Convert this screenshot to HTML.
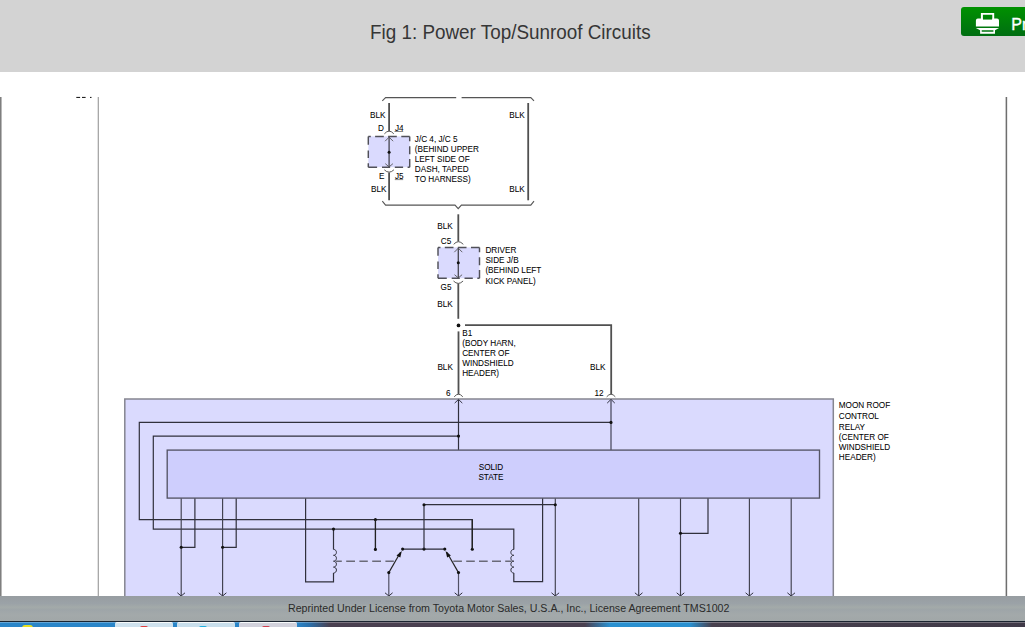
<!DOCTYPE html>
<html><head><meta charset="utf-8"><style>
html,body{margin:0;padding:0;}
body{width:1025px;height:627px;overflow:hidden;position:relative;background:#fff;font-family:"Liberation Sans",sans-serif;}
#hdr{position:absolute;left:0;top:0;width:1025px;height:72px;background:#d3d3d3;}
#title{position:absolute;left:369.5px;top:20px;font-size:20px;color:#363636;transform:scaleX(0.943);transform-origin:0 0;white-space:nowrap;line-height:24px;}
#btn{position:absolute;left:961px;top:7px;width:80px;height:29px;border-radius:3px;background:linear-gradient(#009100,#006e12);}
#btn span{position:absolute;left:50.3px;top:8px;font-size:16px;color:#fff;-webkit-text-stroke:0.35px #fff;line-height:20px;}
svg{position:absolute;left:0;top:0;}
#foot{position:absolute;left:0;top:596px;width:1025px;height:25px;background:linear-gradient(#979da1 0,#9ba2a7 30%,#a3aaa9 45%,#9ea5a8 55%,#a3a9aa 75%,#a1a7a8 100%);}
#foot span{position:absolute;left:288px;top:5px;font-size:10.65px;color:#2a2a2a;white-space:nowrap;line-height:14px;}
#task{position:absolute;left:0;top:621px;width:1025px;height:6px;background:linear-gradient(90deg,#2a85c8 0,#2a85c8 297px,#2c6ea8 310px,#4a4050 330px,#4a4050 585px,#2a90d0 610px,#2a90d0 690px,#48404e 712px,#403a48 1025px);border-top:1px solid #1a2430;box-sizing:border-box;}
#task:after{content:"";position:absolute;left:0;top:0;width:1025px;height:1px;background:rgba(255,255,255,0.28);}
#task i{position:absolute;top:0;height:5px;border-top:1px solid #f4f8fa;box-sizing:border-box;border-radius:2px 2px 0 0;}
</style></head><body>
<div id="hdr"><div id="title">Fig 1: Power Top/Sunroof Circuits</div>
<div id="btn"><svg width="30" height="26" style="position:absolute;left:11px;top:3px" viewBox="0 0 30 26">
<path d="M8.9,2.9H22.2V10.2H8.9Z M10.9,4.8H20.3V9.75H10.9Z" fill="#fff" fill-rule="evenodd"/>
<path d="M5.9,8.5H10.9V9.75H20.3V8.5H25Q27,8.5 27,10.5V16.6H3.9V10.5Q3.9,8.5 5.9,8.5Z" fill="#fff"/>
<path d="M3.9,18H27L23,20.3H8.1Z" fill="#fff"/>
<path d="M8.1,18H23V23.7H8.1Z M9.7,19.3H21.4V21.8H9.7Z" fill="#fff" fill-rule="evenodd"/>
</svg><span>Print</span></div></div>
<svg width="1025" height="627" viewBox="0 0 1025 627" style="font-family:'Liberation Sans',sans-serif">
<rect x="0" y="97" width="1" height="503" fill="#7f7f7f"/><rect x="1" y="97" width="1" height="503" fill="#b8b8b8"/>
<rect x="97" y="97" width="1" height="503" fill="#e2e2e2"/><rect x="98" y="97" width="1" height="503" fill="#a8a8a8"/>
<rect x="1005" y="97" width="1" height="503" fill="#c8c8c8"/><rect x="1006" y="97" width="1" height="503" fill="#6e6e6e"/><rect x="1007" y="97" width="1" height="503" fill="#e8e8e8"/>
<rect x="76.3" y="96.9" width="3.8" height="1.1" fill="#222"/>
<rect x="82" y="96.9" width="3.6" height="1.1" fill="#222"/>
<rect x="90" y="96.9" width="1.5" height="1.1" fill="#222"/>
<polyline points="382.3,100.8 385.6,97.6 456.2,97.6" fill="none" stroke="#555" stroke-width="1.1" />
<polyline points="461.6,97.6 530.8,97.6 534,100.8" fill="none" stroke="#555" stroke-width="1.1" />
<polyline points="382.3,201.2 385.6,205.1 455,205.1 458.2,208.6 461.4,205.1 530.8,205.1 534,201.2" fill="none" stroke="#555" stroke-width="1.1" />
<line x1="389.1" y1="103" x2="389.1" y2="131.2" stroke="#505050" stroke-width="1.8" />
<path d="M384.4,133.8 Q389.1,128.4 393.8,133.8" fill="none" stroke="#505050" stroke-width="0.95"/>
<rect x="368.3" y="136.4" width="41.39999999999998" height="30.799999999999983" fill="#dadafe"/>
<path d="M368.3,136.4H370.8M375.1,136.4H383.8M388.1,136.4H396.8M401.3,136.4H409.7M368.3,167.2H377.1M382.0,167.2H390.1M394.8,167.2H403.1M407.6,167.2H409.7M409.7,136.4V141.20000000000002M409.7,146.3V154.3M409.7,159.1V167.2M368.3,136.4V144.70000000000002M368.3,150.5V158.1M368.3,163.20000000000002V167.2" fill="none" stroke="#505058" stroke-width="1.45" stroke-linecap="butt"/>
<line x1="389.1" y1="137" x2="389.1" y2="167" stroke="#4a4a55" stroke-width="1.35" />
<polyline points="385.1,141.2 389.1,137.2 393.1,141.2" fill="none" stroke="#555" stroke-width="0.9" />
<polyline points="385.3,163.70000000000002 389.1,166.9 392.90000000000003,163.70000000000002" fill="none" stroke="#555" stroke-width="0.9" />
<circle cx="389.1" cy="152.2" r="1.5" fill="#111"/>
<path d="M384.3,169.8 Q389.1,174.5 393.9,169.8" fill="none" stroke="#505050" stroke-width="0.95"/>
<line x1="389.1" y1="172.5" x2="389.1" y2="200.3" stroke="#505050" stroke-width="1.8" />
<line x1="528.2" y1="103" x2="528.2" y2="200.3" stroke="#505050" stroke-width="1.8" />
<text x="370" y="118.2" font-size="8.2" text-anchor="start" fill="#000" stroke="#000" stroke-width="0.05" >BLK</text>
<text x="509.3" y="118.2" font-size="8.2" text-anchor="start" fill="#000" stroke="#000" stroke-width="0.05" >BLK</text>
<text x="378" y="131" font-size="8.2" text-anchor="start" fill="#000" stroke="#000" stroke-width="0.05" >D</text>
<text x="395" y="131" font-size="8.2" text-anchor="start" fill="#000" stroke="#000" stroke-width="0.05" >J4</text>
<line x1="394.5" y1="131.5" x2="403.2" y2="131.5" stroke="#555" stroke-width="0.7" />
<text x="379" y="178.7" font-size="8.2" text-anchor="start" fill="#000" stroke="#000" stroke-width="0.05" >E</text>
<text x="395" y="178.7" font-size="8.2" text-anchor="start" fill="#000" stroke="#000" stroke-width="0.05" >J5</text>
<line x1="394.8" y1="179.6" x2="403.2" y2="179.6" stroke="#555" stroke-width="0.7" />
<text x="371" y="192.2" font-size="8.2" text-anchor="start" fill="#000" stroke="#000" stroke-width="0.05" >BLK</text>
<text x="509.3" y="192.2" font-size="8.2" text-anchor="start" fill="#000" stroke="#000" stroke-width="0.05" >BLK</text>
<text x="414.8" y="142.2" font-size="8.2" text-anchor="start" fill="#000" stroke="#000" stroke-width="0.05" >J/C 4, J/C 5</text>
<text x="414.8" y="152.04999999999998" font-size="8.2" text-anchor="start" fill="#000" stroke="#000" stroke-width="0.05" >(BEHIND UPPER</text>
<text x="414.8" y="161.89999999999998" font-size="8.2" text-anchor="start" fill="#000" stroke="#000" stroke-width="0.05" >LEFT SIDE OF</text>
<text x="414.8" y="171.75" font-size="8.2" text-anchor="start" fill="#000" stroke="#000" stroke-width="0.05" >DASH, TAPED</text>
<text x="414.8" y="181.6" font-size="8.2" text-anchor="start" fill="#000" stroke="#000" stroke-width="0.05" >TO HARNESS)</text>
<line x1="458.3" y1="214.3" x2="458.3" y2="241.5" stroke="#505050" stroke-width="1.8" />
<path d="M453.7,244.3 Q458.3,239.1 463.3,244.3" fill="none" stroke="#505050" stroke-width="0.95"/>
<rect x="438" y="247.4" width="41.5" height="30.799999999999983" fill="#dadafe"/>
<path d="M438,247.4H440.5M444.8,247.4H453.5M457.8,247.4H466.5M471,247.4H479.5M438,278.2H446.8M451.7,278.2H459.8M464.5,278.2H472.8M477.3,278.2H479.5M479.5,247.4V252.20000000000002M479.5,257.3V265.3M479.5,270.1V278.2M438,247.4V255.70000000000002M438,261.5V269.1M438,274.2V278.2" fill="none" stroke="#505058" stroke-width="1.45" stroke-linecap="butt"/>
<line x1="458.3" y1="248" x2="458.3" y2="278" stroke="#4a4a55" stroke-width="1.35" />
<polyline points="454.3,252.2 458.3,248.2 462.3,252.2" fill="none" stroke="#555" stroke-width="0.9" />
<polyline points="454.5,274.7 458.3,277.9 462.1,274.7" fill="none" stroke="#555" stroke-width="0.9" />
<circle cx="458.3" cy="262.8" r="1.5" fill="#111"/>
<path d="M453.5,281 Q458.3,285.8 463.1,281" fill="none" stroke="#505050" stroke-width="0.95"/>
<line x1="458.3" y1="283.5" x2="458.3" y2="318.8" stroke="#505050" stroke-width="1.8" />
<text x="437.2" y="228.8" font-size="8.2" text-anchor="start" fill="#000" stroke="#000" stroke-width="0.05" >BLK</text>
<text x="440.8" y="244.2" font-size="8.2" text-anchor="start" fill="#000" stroke="#000" stroke-width="0.05" >C5</text>
<text x="440.6" y="289.8" font-size="8.2" text-anchor="start" fill="#000" stroke="#000" stroke-width="0.05" >G5</text>
<text x="437.2" y="306.8" font-size="8.2" text-anchor="start" fill="#000" stroke="#000" stroke-width="0.05" >BLK</text>
<text x="485.4" y="253.2" font-size="8.2" text-anchor="start" fill="#000" stroke="#000" stroke-width="0.05" >DRIVER</text>
<text x="485.4" y="263.3" font-size="8.2" text-anchor="start" fill="#000" stroke="#000" stroke-width="0.05" >SIDE J/B</text>
<text x="485.4" y="273.4" font-size="8.2" text-anchor="start" fill="#000" stroke="#000" stroke-width="0.05" >(BEHIND LEFT</text>
<text x="485.4" y="283.5" font-size="8.2" text-anchor="start" fill="#000" stroke="#000" stroke-width="0.05" >KICK PANEL)</text>
<circle cx="458.5" cy="325.4" r="1.85" fill="#111"/>
<polyline points="465,325.2 611.2,325.2 611.2,394.3" fill="none" stroke="#505050" stroke-width="1.8" />
<line x1="458.5" y1="331.4" x2="458.5" y2="394.3" stroke="#505050" stroke-width="1.8" />
<text x="462.2" y="336.2" font-size="8.2" text-anchor="start" fill="#000" stroke="#000" stroke-width="0.05" >B1</text>
<text x="462.2" y="346.15" font-size="8.2" text-anchor="start" fill="#000" stroke="#000" stroke-width="0.05" >(BODY HARN,</text>
<text x="462.2" y="356.09999999999997" font-size="8.2" text-anchor="start" fill="#000" stroke="#000" stroke-width="0.05" >CENTER OF</text>
<text x="462.2" y="366.05" font-size="8.2" text-anchor="start" fill="#000" stroke="#000" stroke-width="0.05" >WINDSHIELD</text>
<text x="462.2" y="376.0" font-size="8.2" text-anchor="start" fill="#000" stroke="#000" stroke-width="0.05" >HEADER)</text>
<text x="437.4" y="370.2" font-size="8.2" text-anchor="start" fill="#000" stroke="#000" stroke-width="0.05" >BLK</text>
<text x="590" y="370.2" font-size="8.2" text-anchor="start" fill="#000" stroke="#000" stroke-width="0.05" >BLK</text>
<text x="446" y="396" font-size="8.2" text-anchor="start" fill="#000" stroke="#000" stroke-width="0.05" >6</text>
<text x="594.4" y="396" font-size="8.2" text-anchor="start" fill="#000" stroke="#000" stroke-width="0.05" >12</text>
<path d="M454.2,396.8 Q458.5,391.6 462.8,396.8" fill="none" stroke="#505050" stroke-width="0.95"/>
<path d="M606.7,396.8 Q611,391.6 615.3,396.8" fill="none" stroke="#505050" stroke-width="0.95"/>
<rect x="124.8" y="399" width="708.5" height="260" fill="#dadafe" stroke="#858590" stroke-width="1.5"/>
<text x="838.8" y="408" font-size="8.2" text-anchor="start" fill="#000" stroke="#000" stroke-width="0.05" >MOON ROOF</text>
<text x="838.8" y="418.7" font-size="8.2" text-anchor="start" fill="#000" stroke="#000" stroke-width="0.05" >CONTROL</text>
<text x="838.8" y="429.6" font-size="8.2" text-anchor="start" fill="#000" stroke="#000" stroke-width="0.05" >RELAY</text>
<text x="838.8" y="439.7" font-size="8.2" text-anchor="start" fill="#000" stroke="#000" stroke-width="0.05" >(CENTER OF</text>
<text x="838.8" y="449.8" font-size="8.2" text-anchor="start" fill="#000" stroke="#000" stroke-width="0.05" >WINDSHIELD</text>
<text x="838.8" y="459.7" font-size="8.2" text-anchor="start" fill="#000" stroke="#000" stroke-width="0.05" >HEADER)</text>
<polyline points="454.7,403.09999999999997 458.5,399.4 462.3,403.09999999999997" fill="none" stroke="#2a2a38" stroke-width="0.95" />
<polyline points="607.2,403.09999999999997 611,399.4 614.8,403.09999999999997" fill="none" stroke="#2a2a38" stroke-width="0.95" />
<line x1="458.5" y1="400" x2="458.5" y2="450.3" stroke="#30303c" stroke-width="1.2" />
<line x1="611" y1="400" x2="611" y2="450.3" stroke="#686880" stroke-width="1.6" />
<polyline points="611,422.4 139.3,422.4 139.3,519.6 472.3,519.6 472.3,549.2" fill="none" stroke="#30303c" stroke-width="1.2" />
<polyline points="458.5,436.1 153.3,436.1 153.3,529.1 513.8,529.1 513.8,549" fill="none" stroke="#30303c" stroke-width="1.2" />
<circle cx="458.5" cy="436.1" r="1.55" fill="#111"/>
<circle cx="611" cy="422.4" r="1.55" fill="#111"/>
<rect x="167.2" y="450.1" width="652.3" height="48" fill="#cecefd" stroke="#555566" stroke-width="1.35"/>
<text x="491" y="470.2" font-size="8.2" text-anchor="middle" fill="#000" stroke="#000" stroke-width="0.05" >SOLID</text>
<text x="491" y="480" font-size="8.2" text-anchor="middle" fill="#000" stroke="#000" stroke-width="0.05" >STATE</text>
<line x1="181.2" y1="498.5" x2="181.2" y2="600" stroke="#40404e" stroke-width="1.15" />
<line x1="222.6" y1="498.5" x2="222.6" y2="600" stroke="#40404e" stroke-width="1.15" />
<line x1="555.3" y1="498.5" x2="555.3" y2="600" stroke="#40404e" stroke-width="1.15" />
<line x1="638.7" y1="498.5" x2="638.7" y2="600" stroke="#40404e" stroke-width="1.15" />
<line x1="680.5" y1="498.5" x2="680.5" y2="600" stroke="#40404e" stroke-width="1.15" />
<line x1="749.4" y1="498.5" x2="749.4" y2="600" stroke="#40404e" stroke-width="1.15" />
<line x1="791.2" y1="498.5" x2="791.2" y2="600" stroke="#40404e" stroke-width="1.15" />
<polyline points="194.9,498.5 194.9,547.3 181.2,547.3" fill="none" stroke="#30303c" stroke-width="1.2" />
<circle cx="181.2" cy="547.3" r="1.55" fill="#111"/>
<polyline points="236.2,498.5 236.2,547.3 222.6,547.3" fill="none" stroke="#30303c" stroke-width="1.2" />
<circle cx="222.6" cy="547.3" r="1.55" fill="#111"/>
<polyline points="708,498.5 708,533.3 680.5,533.3" fill="none" stroke="#30303c" stroke-width="1.2" />
<circle cx="680.5" cy="533.3" r="1.55" fill="#111"/>
<polyline points="305.6,498.5 305.6,581.8 333.5,581.8 333.5,573" fill="none" stroke="#30303c" stroke-width="1.2" />
<polyline points="542.6,498.5 542.6,581.6 513.8,581.6 513.8,573" fill="none" stroke="#30303c" stroke-width="1.2" />
<line x1="333.5" y1="529.1" x2="333.5" y2="549.4" stroke="#30303c" stroke-width="1.2" />
<path d="M333.5,549.4 C337.4,549.4 337.4,555.3 333.5,555.3 C337.4,555.3 337.4,561.1999999999999 333.5,561.1999999999999 C337.4,561.2 337.4,567.1 333.5,567.1 C337.4,567.1 337.4,573.0 333.5,573.0" fill="none" stroke="#30303c" stroke-width="1.0"/>
<line x1="513.8" y1="549" x2="513.8" y2="549.4" stroke="#30303c" stroke-width="1.2" />
<path d="M513.8,549.4 C509.9,549.4 509.9,555.3 513.8,555.3 C509.9,555.3 509.9,561.1999999999999 513.8,561.1999999999999 C509.9,561.2 509.9,567.1 513.8,567.1 C509.9,567.1 509.9,573.0 513.8,573.0" fill="none" stroke="#30303c" stroke-width="1.0"/>
<circle cx="333.5" cy="529.1" r="1.55" fill="#111"/>
<circle cx="375.4" cy="519.6" r="1.55" fill="#111"/>
<line x1="375.4" y1="519.6" x2="375.4" y2="549.4" stroke="#222" stroke-width="1.35" />
<circle cx="375.4" cy="549.4" r="1.55" fill="#111"/>
<circle cx="472.3" cy="549.2" r="1.55" fill="#111"/>
<line x1="472.3" y1="519.6" x2="472.3" y2="549.2" stroke="#222" stroke-width="1.35" />
<line x1="388.8" y1="572.6" x2="388.8" y2="600" stroke="#505064" stroke-width="1.2" />
<line x1="458.5" y1="572.6" x2="458.5" y2="600" stroke="#505064" stroke-width="1.2" />
<line x1="388.8" y1="572.6" x2="400.5" y2="552.2" stroke="#222" stroke-width="1.15" />
<polygon points="401.8,550.9 396.5,555.6 400.3,557.5" fill="#111"/>
<line x1="458.5" y1="572.6" x2="446.8" y2="552.2" stroke="#222" stroke-width="1.15" />
<polygon points="445.6,550.9 450.9,555.6 447.1,557.5" fill="#111"/>
<circle cx="388.8" cy="572.6" r="1.55" fill="#111"/>
<circle cx="458.5" cy="572.6" r="1.55" fill="#111"/>
<line x1="402.6" y1="549.1" x2="444.8" y2="549.1" stroke="#2a2a36" stroke-width="1.15" />
<circle cx="402.6" cy="549.1" r="1.55" fill="#111"/>
<circle cx="424" cy="549.1" r="1.55" fill="#111"/>
<circle cx="444.8" cy="549.1" r="1.55" fill="#111"/>
<line x1="424" y1="504.7" x2="424" y2="549.1" stroke="#30303c" stroke-width="1.2" />
<line x1="424" y1="504.7" x2="555.3" y2="504.7" stroke="#30303c" stroke-width="1.2" />
<circle cx="424" cy="504.7" r="1.55" fill="#111"/>
<circle cx="555.3" cy="504.7" r="1.55" fill="#111"/>
<path d="M336,561.2H341.8M346.2,561.2H355M359.4,561.2H367.8M372.2,561.2H381M385.4,561.2H393.8M453.3,561.2H461.9M466.2,561.2H474.8M479,561.2H487.7M492,561.2H501M505.2,561.2H511.5" stroke="#6a6a78" stroke-width="1.5" fill="none"/>
<polyline points="177.39999999999998,592.8 181.2,596 185.0,592.8" fill="none" stroke="#30303c" stroke-width="1.0" />
<polyline points="218.79999999999998,592.8 222.6,596 226.4,592.8" fill="none" stroke="#30303c" stroke-width="1.0" />
<polyline points="385.0,592.8 388.8,596 392.6,592.8" fill="none" stroke="#30303c" stroke-width="1.0" />
<polyline points="454.7,592.8 458.5,596 462.3,592.8" fill="none" stroke="#30303c" stroke-width="1.0" />
<polyline points="551.5,592.8 555.3,596 559.0999999999999,592.8" fill="none" stroke="#30303c" stroke-width="1.0" />
<polyline points="634.9000000000001,592.8 638.7,596 642.5,592.8" fill="none" stroke="#30303c" stroke-width="1.0" />
<polyline points="676.7,592.8 680.5,596 684.3,592.8" fill="none" stroke="#30303c" stroke-width="1.0" />
<polyline points="745.6,592.8 749.4,596 753.1999999999999,592.8" fill="none" stroke="#30303c" stroke-width="1.0" />
<polyline points="787.4000000000001,592.8 791.2,596 795.0,592.8" fill="none" stroke="#30303c" stroke-width="1.0" />
</svg>
<div id="foot"><span>Reprinted Under License from Toyota Motor Sales, U.S.A., Inc., License Agreement TMS1002</span></div>
<div id="task"><i style="left:115px;width:58px;background:#cfe2ee"></i><i style="left:177px;width:58px;background:#c9dfec"></i><i style="left:239px;width:58px;background:#d2d2dc"></i><b style="position:absolute;left:22px;top:3px;width:11px;height:3px;background:#e8e020;border-radius:5px 5px 0 0"></b><b style="position:absolute;left:140px;top:4px;width:8px;height:2px;background:#e04040;border-radius:4px 4px 0 0"></b><b style="position:absolute;left:199px;top:4px;width:8px;height:2px;background:#20b0e0;border-radius:4px 4px 0 0"></b><b style="position:absolute;left:262px;top:4px;width:8px;height:2px;background:#d04050;border-radius:4px 4px 0 0"></b></div>
</body></html>
